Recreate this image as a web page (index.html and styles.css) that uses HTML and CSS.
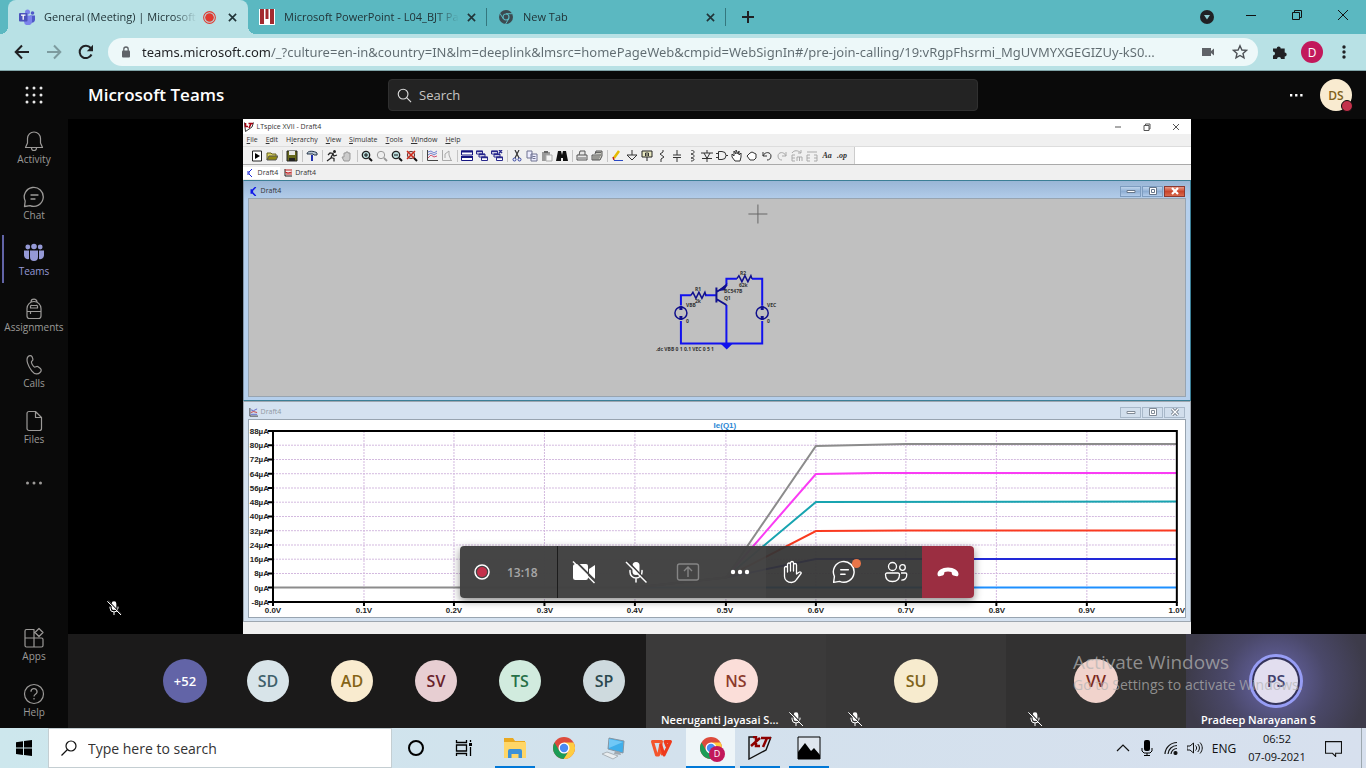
FILE: index.html
```html
<!DOCTYPE html>
<html lang="en">
<head>
<meta charset="utf-8">
<title>General (Meeting) | Microsoft Teams</title>
<link rel="stylesheet" href="styles.css">
</head>
<body>
<svg class="defs" aria-hidden="true">
  <symbol id="x" viewBox="0 0 10 10"><path d="M1 1l8 8M9 1L1 9" fill="none" stroke="currentColor" stroke-width="1.8"/></symbol>
  <symbol id="mic-off" viewBox="0 0 24 24"><rect x="8.500" y="2" width="7" height="13" rx="3.500" fill="currentColor"/><path d="M6 10.500v1.500a6 6 0 0 0 12 0v-1.500M12 18v4" fill="none" stroke="currentColor" stroke-width="1.500" stroke-linecap="round"/><path d="M3.500 1L23 21.500" stroke="#3b3a3a" stroke-width="1.800"/><path d="M2 2l20.500 20.500" stroke="currentColor" stroke-width="1.500"/></symbol>
  <symbol id="chat" viewBox="0 0 22 22"><path d="M1.500 20.500l.7-5.500A9.500 9.500 0 1 1 7 19.600z" fill="none" stroke="currentColor" stroke-width="1.300" stroke-linejoin="round"/><path d="M8 9h7M8 13h4" stroke="currentColor" stroke-width="1.300" stroke-linecap="round"/></symbol>
  <symbol id="chrome" viewBox="0 0 24 24"><circle cx="12" cy="12" r="11" fill="#dd4b3c"/><path d="M12 6.500h9.500A11 11 0 0 1 11.500 23L17 14z" fill="#ffcd41"/><path d="M2.500 6.500L7.400 15l4.600 2.500 3.500-.5-4 6A11 11 0 0 1 2.500 6.500z" fill="#1c9c56"/><circle cx="12" cy="12" r="5.500" fill="#fff"/><circle cx="12" cy="12" r="4.200" fill="#4a8af4"/></symbol>
</svg>

<div class="tabstrip">
  <div class="tab tab-active">
    <svg class="favicon" viewBox="0 0 16 16"><circle cx="8.500" cy="3" r="2.500" fill="#7b83eb"/><circle cx="13.500" cy="4" r="1.800" fill="#5059c9"/><path d="M11 6.500h5V11a3 3 0 0 1-4 2.500z" fill="#5059c9"/><path d="M5 6.500h8V12a4 4 0 0 1-8 .5z" fill="#7b83eb"/><rect y="4" width="8.500" height="8.500" rx="1" fill="#4b53bc"/><path d="M2 6.200h4.500M4.200 6.200v4.600" stroke="#fff" stroke-width="1.300"/></svg>
    <a class="tab-title" href="#meeting">General (Meeting) | Microsoft Teams</a>
    <svg class="rec" viewBox="0 0 12 12"><circle cx="6" cy="6" r="5.400" fill="none" stroke="#e03a30"/><circle cx="6" cy="6" r="4" fill="#e03a30"/></svg>
    <button class="tab-close" aria-label="Close tab"><svg><use href="#x"/></svg></button>
  </div>
  <div class="tab">
    <svg class="favicon" viewBox="0 0 16 16"><path fill="#fff" d="M0 0h16v16H0z"/><path fill="#a32a2f" d="M1 0h4v15H1zM6.500 0h3v10h-3zM11 0h4v15h-4z"/></svg>
    <a class="tab-title" href="#slides">Microsoft PowerPoint - L04_BJT Part</a>
    <button class="tab-close" aria-label="Close tab"><svg><use href="#x"/></svg></button>
  </div>
  <div class="tab">
    <svg class="favicon" viewBox="0 0 16 16"><circle cx="8" cy="8" r="7" fill="#3c4a50"/><circle cx="8" cy="8" r="3" fill="#3c4a50" stroke="#5bb8c1" stroke-width="1.200"/><path d="M8 4.700h6.300M5.200 9.700L2 4.400M10.800 9.700L7.600 15" stroke="#5bb8c1"/></svg>
    <a class="tab-title" href="#newtab">New Tab</a>
    <button class="tab-close" aria-label="Close tab"><svg><use href="#x"/></svg></button>
  </div>
  <button class="newtab" aria-label="New tab"><svg viewBox="0 0 12 12"><path d="M6 0v12M0 6h12" stroke="#202124" stroke-width="2"/></svg></button>
  <div class="winbtns">
    <button class="tabsearch" aria-label="Search tabs"><svg viewBox="0 0 14 14"><circle cx="7" cy="7" r="7" fill="#202124"/><path d="M4 5h6L7 9.500z" fill="#8fcdd3"/></svg></button>
    <button aria-label="Minimize"><svg viewBox="0 0 12 12"><path d="M1 6.500h10" stroke="#111"/></svg></button>
    <button aria-label="Restore"><svg viewBox="0 0 12 12"><path d="M1.500 3.500h7v7h-7zM3.500 3V1.500h7v7H9" fill="none" stroke="#111"/></svg></button>
    <button aria-label="Close"><svg viewBox="0 0 12 12"><path d="M1 1l10 10M11 1L1 11" stroke="#111"/></svg></button>
  </div>
</div>

<div class="navbar">
  <button aria-label="Back"><svg viewBox="0 0 16 16"><path d="M15 8H2M8 1.500L1.700 8 8 14.500" fill="none" stroke="#202124" stroke-width="2"/></svg></button>
  <button aria-label="Forward"><svg viewBox="0 0 16 16"><path d="M1 8h13M8 1.500L14.300 8 8 14.500" fill="none" stroke="#7d9b9f" stroke-width="2"/></svg></button>
  <button aria-label="Reload"><svg viewBox="0 0 16 16"><path d="M13.500 10.500A6.200 6.200 0 1 1 12.700 4" fill="none" stroke="#202124" stroke-width="2"/><path d="M15 .8v6.400H8.800z" fill="#202124"/></svg></button>
  <div class="omnibox">
    <svg class="lock" viewBox="0 0 10 12"><rect x="1" y="4.500" width="8" height="7" rx="1" fill="#5f6368"/><path d="M2.800 5V3.200a2.200 2.200 0 0 1 4.400 0V5" fill="none" stroke="#5f6368" stroke-width="1.300"/></svg>
    <input class="url" type="text" aria-label="Address" value="teams.microsoft.com/_?culture=en-in&amp;country=IN&amp;lm=deeplink&amp;lmsrc=homePageWeb&amp;cmpid=WebSignIn#/pre-join-calling/19:vRgpFhsrmi_MgUVMYXGEGIZUy-kS0...">
    <button aria-label="Camera"><svg viewBox="0 0 16 16"><path d="M2 4h9v3l3-2.500v7L11 9v3H2z" fill="#5f6368"/></svg></button>
    <button aria-label="Bookmark"><svg viewBox="0 0 16 16"><path d="M8 1.800l1.900 4.200 4.500.4-3.400 3 1 4.500L8 11.500 4 13.900l1-4.500-3.400-3 4.500-.4z" fill="none" stroke="#4d5156" stroke-width="1.400"/></svg></button>
  </div>
  <button aria-label="Extensions"><svg viewBox="0 0 16 16"><path d="M1 4.500h3.700a2 2 0 1 1 4 0h4v4a2 2 0 1 1 0 4V15H9a2 2 0 0 0-4 0H1v-3.500a2 2 0 0 0 0-4z" fill="#202124"/></svg></button>
  <button class="profile" aria-label="Profile">D</button>
  <button aria-label="Chrome menu"><svg viewBox="0 0 16 16" fill="#202124"><circle cx="8" cy="3" r="1.700"/><circle cx="8" cy="8" r="1.700"/><circle cx="8" cy="13" r="1.700"/></svg></button>
</div>

<header class="teams-header">
  <div class="brand">
    <button aria-label="App launcher"><svg viewBox="0 0 18 18" fill="#e8e8e8"><circle cx="2" cy="2" r="1.500"/><circle cx="9" cy="2" r="1.500"/><circle cx="16" cy="2" r="1.500"/><circle cx="2" cy="9" r="1.500"/><circle cx="9" cy="9" r="1.500"/><circle cx="16" cy="9" r="1.500"/><circle cx="2" cy="16" r="1.500"/><circle cx="9" cy="16" r="1.500"/><circle cx="16" cy="16" r="1.500"/></svg></button>
    <h1>Microsoft Teams</h1>
  </div>
  <label class="teams-search">
    <svg viewBox="0 0 16 16"><circle cx="6.500" cy="6.500" r="5.200" fill="none" stroke="#ddd" stroke-width="1.200"/><path d="M10.300 10.300L15 15" stroke="#ddd" stroke-width="1.200"/></svg>
    <input type="search" placeholder="Search" aria-label="Search">
  </label>
  <div class="account">
    <button aria-label="Settings and more"><svg viewBox="0 0 14 4" fill="#fff"><path d="M0 1h2.500v2.500H0zM5.500 1H8v2.500H5.500zM11 1h2.500v2.500H11z"/></svg></button>
    <button class="me" aria-label="Account">DS<span class="presence"></span></button>
  </div>
</header>

<div class="app">
  <nav class="rail">
    <a href="#activity"><svg viewBox="0 0 22 22"><path d="M11 2a6.500 6.500 0 0 0-6.500 6.500V13l-2 4.500h17l-2-4.500V8.500A6.500 6.500 0 0 0 11 2zM8.500 18a2.500 2.500 0 0 0 5 0"/></svg>Activity</a>
    <a href="#chat"><svg><use href="#chat"/></svg>Chat</a>
    <a href="#teams" class="current"><svg class="solid" viewBox="0 0 22 22"><circle cx="4.800" cy="5" r="2.400"/><circle cx="11" cy="4.500" r="2.800"/><circle cx="17.200" cy="5" r="2.400"/><path d="M1 8.500h5V17a4 4 0 0 1-5-3.500zM21 8.500h-5V17a4 4 0 0 0 5-3.500zM7 8.500h8V15a4 4 0 0 1-8 0z"/></svg>Teams</a>
    <a href="#assignments"><svg viewBox="0 0 22 22"><path d="M4 10.500a7 7 0 0 1 14 0V18a2.500 2.500 0 0 1-2.500 2.500h-9A2.500 2.500 0 0 1 4 18zM8 4a3 2.800 0 0 1 6 0M4 13.500h14M7.500 13.500V16M9 7.500h4a1 1 0 0 1 1.500 1v1.500h-7V8.500a1 1 0 0 1 1.500-1z"/></svg>Assignments</a>
    <a href="#calls"><svg viewBox="0 0 22 22"><path d="M5.200 2.500c1-1 3-1.200 3.900.3l.8 2.300c.4 1.300-1.400 2-1.500 3 0 1.200 1.700 4.400 2.900 4.900 1.300.5 2.200-1.200 3.800-.3l2.300 1.800c1.400 1.200.8 2.900-.4 4-1.800 1.900-5 2.500-8.300-1.700C5.300 12.500 2.300 5.500 5.200 2.500z"/></svg>Calls</a>
    <a href="#files"><svg viewBox="0 0 22 22"><path d="M6 1.500h6.500L18.500 7.500V18.500a2 2 0 0 1-2 2H6a2 2 0 0 1-2-2v-15a2 2 0 0 1 2-2zM12.500 1.500v6h6"/></svg>Files</a>
    <button aria-label="More apps"><svg class="solid" viewBox="0 0 22 22"><circle cx="4.500" cy="11" r="1.500"/><circle cx="11" cy="11" r="1.500"/><circle cx="17.500" cy="11" r="1.500"/></svg></button>
    <a href="#apps" class="push"><svg viewBox="0 0 22 22"><path d="M11 2.500H3.500a1.500 1.500 0 0 0-1.500 1.500v7h9zM2 11v7.500A1.500 1.500 0 0 0 3.500 20H11v-9zM11 11h7.500a1.500 1.500 0 0 1 1.500 1.500v6a1.500 1.500 0 0 1-1.500 1.500H11zM16 1.500l4 4-4 4-4-4z"/></svg>Apps</a>
    <a href="#help"><svg viewBox="0 0 22 22"><circle cx="11" cy="11" r="9.500"/><path d="M8 8.700a3 3 0 1 1 4.500 2.500c-1 .6-1.500 1-1.500 2.300M11 15v1.500"/></svg>Help</a>
  </nav>

  <main class="meeting">
    <section class="stage">
      <svg class="stage-mic"><use href="#mic-off"/></svg>

      <div class="ltspice">
        <div class="lt-title">
          <svg viewBox="0 0 10 10"><path d="M.5.500L1.500 9.500 8 5 9.500.5" fill="#fff" stroke="#333"/><path d="M1.500 1v3.500H4M4.500 1.500h4.500M7 1.500L5 6" stroke="#a00010" stroke-width="1.600" fill="none"/></svg>
          <span>LTspice XVII - Draft4</span>
          <div class="lt-win"><svg viewBox="0 0 8 8"><path d="M1 4h6"/></svg><svg viewBox="0 0 8 8"><path d="M1 2.500h5v5H1zM2.500 2V1H7v5H6"/></svg><svg viewBox="0 0 8 8"><path d="M1 1l6 6M7 1L1 7"/></svg></div>
        </div>
        <div class="lt-menu">
          <button><u>F</u>ile</button><button><u>E</u>dit</button><button>H<u>i</u>erarchy</button><button><u>V</u>iew</button><button><u>S</u>imulate</button><button><u>T</u>ools</button><button><u>W</u>indow</button><button><u>H</u>elp</button>
        </div>
        <div class="lt-tools">
          <div class="lt-tools-set">
            <button aria-label="New"><svg viewBox="0 0 12 12"><path d="M1.500 1h9v10h-9z" fill="#fff" stroke="#222"/><path d="M4 3l5 3-5 3z" fill="#000"/></svg></button>
            <button aria-label="Open"><svg viewBox="0 0 12 12"><path d="M1 10V3h4l1 1h4v2" fill="#d8d060" stroke="#666020"/><path d="M1 10l2-4h9l-2 4z" fill="#908810" stroke="#555"/></svg></button><i></i>
            <button aria-label="Save"><svg viewBox="0 0 12 12"><path d="M1 1h10v10H1z" fill="#66681c" stroke="#222"/><path d="M3 1h6v4H3z" fill="#e8e8e8"/><path d="M3 8h6v3H3z" fill="#222"/></svg></button><i></i>
            <button aria-label="Control panel"><svg viewBox="0 0 12 12"><path d="M1 4c0-4 8-3 10-1v2H8L7 4H3z" fill="#b6c4d0" stroke="#26364a"/><path d="M6 5v6" stroke="#2030b0" stroke-width="2"/></svg></button><i></i>
            <button aria-label="Run"><svg viewBox="0 0 12 12"><circle cx="8.500" cy="1.500" r="1.500" fill="#222"/><path d="M2 5l2-2 3 .5-2 4 3 1v3M5 8l-4 3M7 4l1 2 3-1" fill="none" stroke="#222" stroke-width="1.200"/></svg></button>
            <button aria-label="Halt"><svg viewBox="0 0 12 12"><path d="M3 11L1 7h2V3h2V2h2v1h2v6l-1 2z" fill="#ccc" stroke="#999"/></svg></button><i></i>
            <button aria-label="Zoom in"><svg viewBox="0 0 12 12"><circle cx="5" cy="5" r="3.700" fill="#bdd" stroke="#222" stroke-width="1.300"/><path d="M3 5h4M5 3v4" stroke="#111"/><path d="M8 8l3 3" stroke="#111" stroke-width="2"/></svg></button>
            <button aria-label="Pan"><svg viewBox="0 0 12 12"><circle cx="5" cy="5" r="3.700" fill="#eee" stroke="#999"/><path d="M8 8l3 3" stroke="#999" stroke-width="1.800"/></svg></button>
            <button aria-label="Zoom out"><svg viewBox="0 0 12 12"><circle cx="5" cy="5" r="3.700" fill="#bdd" stroke="#222" stroke-width="1.300"/><path d="M3 5h4" stroke="#111"/><path d="M8 8l3 3" stroke="#111" stroke-width="2"/></svg></button>
            <button aria-label="Zoom full"><svg viewBox="0 0 12 12"><circle cx="5" cy="5" r="3.700" fill="#dcc" stroke="#633"/><path d="M1 1l8 8M9 1L1 9" stroke="#d02818" stroke-width="1.500"/><path d="M8 8l3 3" stroke="#111" stroke-width="2"/></svg></button><i></i>
            <button aria-label="Autorange"><svg viewBox="0 0 12 12"><path d="M1.500 0v10.500H12" fill="none" stroke="#444"/><path d="M2 2l3-1 3 2 3-2M2 5l3-2 3 2 3-2" fill="none" stroke="#7080d0"/><path d="M2 8l3-3 3 2 3-1" fill="none" stroke="#d05070"/></svg></button>
            <button aria-label="Plot settings"><svg viewBox="0 0 12 12"><path d="M1.500 0v10.500H11M4 8V4l4-3v4l2 5" fill="none" stroke="#aaa"/></svg></button><i></i>
            <button aria-label="Tile"><svg viewBox="0 0 12 12"><path d="M.5 1h11v4H.5zM.5 6.500h11v4H.5z" fill="#fff" stroke="#151580"/><path d="M0 1.500h12M0 7h12" stroke="#151580" stroke-width="2"/></svg></button>
            <button aria-label="Cascade"><svg viewBox="0 0 12 12"><path d="M.5 1h6v3h-6zM3 4h6v3H3zM5.500 7h6v3.500h-6z" fill="#fff" stroke="#28288c"/><path d="M0 1.500h7M3 4.500h6M5 7.500h7" stroke="#28288c" stroke-width="1.600"/></svg></button>
            <button aria-label="Close windows"><svg viewBox="0 0 12 12"><path d="M.5 1h6v3h-6zM3 4h6v3H3zM5.500 7h6v3.500h-6z" fill="#fff" stroke="#28288c"/><path d="M0 1.500h7M3 4.500h6M5 7.500h7M8 0l3 3M11 0L8 3" stroke="#28288c" stroke-width="1.500"/></svg></button><i></i>
            <button aria-label="Cut"><svg viewBox="0 0 12 12"><path d="M4 0l4 8M8 0L4 8" stroke="#333" stroke-width="1.200"/><circle cx="3.500" cy="9.500" r="1.500" fill="none" stroke="#3040a0"/><circle cx="8.500" cy="9.500" r="1.500" fill="none" stroke="#3040a0"/></svg></button>
            <button aria-label="Copy"><svg viewBox="0 0 12 12"><path d="M1 1h5v7H1zM5 4h6v7H5z" fill="#eef" stroke="#6f7290"/><path d="M6.500 6.500h3M6.500 8.500h3" stroke="#6f7290"/></svg></button>
            <button aria-label="Paste"><svg viewBox="0 0 12 12"><path d="M1 2h8v9H1z" fill="#999"/><path d="M3 1h4v2H3z" fill="#666"/><path d="M5 5h6v6H5z" fill="#f4f4f4" stroke="#aaa"/></svg></button>
            <button aria-label="Find"><svg viewBox="0 0 12 12"><path d="M2 1h3l1 4 1-4h3l2 10H7V8H5v3H0z" fill="#111"/></svg></button><i></i>
            <button aria-label="Print"><svg viewBox="0 0 12 12"><path d="M3 5l1-4h5v4M1 5h10v5H1z" fill="#e6e6e6" stroke="#555"/><path d="M2 8h8" stroke="#666"/></svg></button>
            <button aria-label="Print setup"><svg viewBox="0 0 12 12"><path d="M4 4l1-3h6v5l-2 4H1V5h9" fill="#c9c9c0" stroke="#555"/><path d="M2 7h7M5 2.500h5M2 9h6" stroke="#666"/></svg></button><i></i>
            <button aria-label="Wire"><svg viewBox="0 0 12 12"><path d="M3 8l5-7" stroke="#e5ba00" stroke-width="2.500"/><path d="M2 7l1 3" stroke="#b22" stroke-width="1.500"/><path d="M3 10.500h9" stroke="#2947c4"/></svg></button>
            <button aria-label="Ground"><svg viewBox="0 0 12 12"><path d="M6 0v5M1 5h10L6 10z"/></svg></button>
            <button aria-label="Label net"><svg viewBox="0 0 12 12"><path d="M1 1h10v6H1zM6 7v4" fill="#e8e8c0" stroke="#222"/><path d="M4.500 6V3h3v3M4.500 5h3"/></svg></button>
            <button aria-label="Resistor"><svg viewBox="0 0 12 12"><path d="M7 0v2L4 4l4 3-3 2v3"/></svg></button>
            <button aria-label="Capacitor"><svg viewBox="0 0 12 12"><path d="M6 0v5M2 5h8M2 7.500h8M6 7.500V12"/></svg></button>
            <button aria-label="Inductor"><svg viewBox="0 0 12 12"><path d="M5 0c4 0 4 4 0 4 4 0 4 4 0 4 4 0 4 3 0 3"/></svg></button>
            <button aria-label="Diode"><svg viewBox="0 0 12 12"><path d="M0 3h12M6 0v3M1 8.500h10M3 3l3 5.500L9 3M6 8.500V12"/></svg></button>
            <button aria-label="Component"><svg viewBox="0 0 12 12"><path d="M2.500 1.500H6a4 4 0 0 1 0 8H2.500zM0 3.500h2M0 7.500h2M10 5.500h2"/></svg></button>
            <button aria-label="Move"><svg viewBox="0 0 12 12"><path d="M4 11L1 7V4l2 2V1l2 3V0l2 4 1-3v4l2-2v4l-1 4z" fill="#fff" stroke="#333"/></svg></button>
            <button aria-label="Drag"><svg viewBox="0 0 12 12"><path d="M4 10L1 6l2-2 1-1 2-1 2 1 2 1v4l-2 2z" fill="#fff" stroke="#333"/></svg></button>
            <button aria-label="Undo"><svg viewBox="0 0 12 12"><path d="M2 2v4h4M2 6c2-5 8-4 8 0 0 3-2 4-4 4"/></svg></button>
            <button aria-label="Redo" class="dim"><svg viewBox="0 0 12 12"><path d="M10 2v4H6M10 6C8 1 2 2 2 6c0 3 2 4 4 4"/></svg></button>
            <button aria-label="Rotate" class="dim"><svg viewBox="0 0 12 12"><path d="M1 3c2-3 6-3 9 0M10 0v3H7M4 5H1v6h3M1 8h3M6 11V7h5v4M8.500 7v4"/></svg></button>
            <button aria-label="Mirror" class="dim"><svg viewBox="0 0 12 12"><path d="M1 2h10M4 5H1v6h3M1 8h3M8 5h3v6H8M11 8H8"/></svg></button>
            <button aria-label="Text"><b>Aa</b></button>
            <button aria-label="SPICE directive"><b>.op</b></button>
          </div>
        </div>
        <div class="lt-tabs">
          <a href="#schematic" class="lt-tab lt-tab-on"><svg viewBox="0 0 8 8"><path d="M5 0L2 3v2l3 3M1 2v4" fill="none" stroke="#1c28d8"/></svg>Draft4</a>
          <a href="#plot" class="lt-tab"><svg viewBox="0 0 8 8"><path d="M1 0v7h7" fill="none" stroke="#222"/><path d="M1 1h7M1 3l3 1 4-1M2 5h6" fill="none" stroke="#c02020"/></svg>Draft4</a>
        </div>

        <div class="child child-active">
          <div class="child-bar">
            <svg viewBox="0 0 8 8"><path d="M6 0L3 3v2l3 3M2 2v4" fill="none" stroke="#1018e8" stroke-width="1.300"/></svg>
            <span>Draft4</span>
            <button aria-label="Minimize schematic"><svg viewBox="0 0 10 8"><path d="M1 3.500h8v2H1z" fill="#fff" stroke="#66768a"/></svg></button>
            <button aria-label="Maximize schematic"><svg viewBox="0 0 10 8"><path d="M1.500.5h7v7h-7zM3.500 2.500h3v3h-3z" fill="#fff" stroke="#66768a"/></svg></button>
            <button aria-label="Close schematic" class="close"><svg viewBox="0 0 10 8"><path d="M2 1l6 6M8 1L2 7" stroke="#fff" stroke-width="2.200"/></svg></button>
          </div>
          <div class="canvas">
            <svg viewBox="249 199 937 197">
              <path d="M748.500 214h19M758 204.500v19" stroke="#666"/>
              <g fill="none" stroke="#1212ee" stroke-width="2">
                <path d="M681 305.500V295.300h10M705 295.300h11M726.500 286v-7.300h10.500M752 278.700h10.300v27M681 321v22.500h81.300V321M726.500 305v38.500"/>
                <path d="M723 344.500h7.500l-3.700 3.700z" fill="#1212ee"/>
              </g>
              <g fill="none" stroke="#10108c" stroke-width="1.500">
                <path d="M691 295.300l2-3 3 6 3-6 3 6 3-6 1 3M737 278.700l2-3 3 6 3-6 3 6 3-6 1 3"/>
                <path d="M716.500 287.500v15M716.500 292l10-6M716.500 299l10 6" stroke-width="2"/>
                <path d="M720 290l6-5-1.500 4.500z" fill="#10108c"/>
                <circle cx="681" cy="313" r="6"/><circle cx="762.300" cy="313" r="6"/>
                <path d="M681 306v4M681 316v4M762.300 306v4M762.300 316v4" stroke-width="3"/>
              </g>
              <g class="net-labels">
                <text x="695" y="291">R1</text><text x="695" y="303">2k</text><text x="740" y="275">R2</text><text x="739" y="287">62k</text>
                <text x="724" y="293.500">BC547B</text><text x="724" y="300.500">Q1</text>
                <text x="686" y="307.500">VBB</text><text x="686" y="323">0</text><text x="767" y="307.500">VEC</text><text x="767" y="323">0</text>
                <text x="656" y="351">.dc VBB 0 1 0.1 VEC 0 5 1</text>
              </g>
            </svg>
          </div>
        </div>

        <div class="child child-plot">
          <div class="child-bar">
            <svg viewBox="0 0 10 10"><path d="M1 0v9h9" fill="none" stroke="#333"/><path d="M2 2l3 1 4-2M2 7h7" fill="none" stroke="#5860c8"/><path d="M2 5l3-1 4 1" fill="none" stroke="#c03030"/></svg>
            <span>Draft4</span>
            <button aria-label="Minimize plot"><svg viewBox="0 0 10 8"><path d="M1 3.500h8v2H1z" fill="#fff" stroke="#808a96"/></svg></button>
            <button aria-label="Maximize plot"><svg viewBox="0 0 10 8"><path d="M1.500.5h7v7h-7zM3.500 2.500h3v3h-3z" fill="#fff" stroke="#808a96"/></svg></button>
            <button aria-label="Close plot"><svg viewBox="0 0 10 8"><path d="M2 1l6 6M8 1L2 7" stroke="#69737f" stroke-width="3"/><path d="M2 1l6 6M8 1L2 7" stroke="#fff" stroke-width="1.400"/></svg></button>
          </div>
          <div class="canvas">
            <svg viewBox="249 421 937 197">
              <path class="grid" d="M273 446.200h904M273 460.500h904M273 474.700h904M273 489h904M273 503.200h904M273 517.500h904M273 531.700h904M273 546h904M273 560.200h904M273 574.500h904M364 432v171M454 432v171M544.500 432v171M635 432v171M726 432v171M816 432v171M906 432v171M996.500 432v171M1087 432v171"/>
              <g fill="none" stroke-width="2">
                <path d="M635 588.500h542" stroke="#1e90ff"/>
                <path d="M635 588.500l91-10 90-18.500h361" stroke="#2229d8"/>
                <path d="M635 588.500l91-10 90-46.500 90-.5h271" stroke="#fa3a20"/>
                <path d="M635 588.500l91-10 90-75.500 361-.5" stroke="#18a4b0"/>
                <path d="M635 588.500l91-10 90-103.500 60-1h301" stroke="#fa3cf4"/>
                <path d="M273 588.500h362l91-10 90-131.500 90-2h271" stroke="#8c8c8c"/>
                <path d="M273 432h904v171H273z" stroke="#000"/>
                <path d="M268 432h5M268 446.200h5M268 460.500h5M268 474.700h5M268 489h5M268 503.200h5M268 517.500h5M268 531.700h5M268 546h5M268 560.200h5M268 574.500h5M268 588.500h5M268 603h5M273 603v4M364 603v4M454 603v4M544.500 603v4M635 603v4M726 603v4M816 603v4M906 603v4M996.500 603v4M1087 603v4M1177 603v4" stroke="#000"/>
              </g>
              <text class="trace" x="725" y="429">Ie(Q1)</text>
              <g class="ylab"><text x="269" y="435">88µA</text><text x="269" y="449">80µA</text><text x="269" y="463">72µA</text><text x="269" y="478">64µA</text><text x="269" y="492">56µA</text><text x="269" y="506">48µA</text><text x="269" y="520">40µA</text><text x="269" y="535">32µA</text><text x="269" y="549">24µA</text><text x="269" y="563">16µA</text><text x="269" y="577">8µA</text><text x="269" y="592">0µA</text><text x="269" y="606">-8µA</text></g>
              <g class="xlab"><text x="273" y="614">0.0V</text><text x="364" y="614">0.1V</text><text x="454" y="614">0.2V</text><text x="545" y="614">0.3V</text><text x="635" y="614">0.4V</text><text x="725" y="614">0.5V</text><text x="816" y="614">0.6V</text><text x="906" y="614">0.7V</text><text x="997" y="614">0.8V</text><text x="1087" y="614">0.9V</text><text x="1177" y="614">1.0V</text></g>
            </svg>
          </div>
        </div>
        <div class="lt-status"></div>
      </div>

      <div class="callbar">
        <div class="callbar-rec">
          <svg viewBox="0 0 16 16"><circle cx="8" cy="8" r="7" fill="none" stroke="#fff" stroke-width="1.500"/><circle cx="8" cy="8" r="5" fill="#c4314b"/></svg>
          <span>13:18</span>
        </div>
        <button aria-label="Turn camera on"><svg viewBox="0 0 24 24"><path d="M3.500 4H14a2 2 0 0 1 2 2v12a2 2 0 0 1-2 2H3.500A2.500 2.500 0 0 1 1 17.500v-11A2.500 2.500 0 0 1 3.500 4zM17 9l6-4v14l-6-4z" fill="#fff"/><path d="M3 .500L24 21.500" stroke="#444" stroke-width="1.800"/><path d="M1 1.500l21.500 21.500" stroke="#fff" stroke-width="1.500"/></svg></button>
        <button aria-label="Unmute"><svg><use href="#mic-off"/></svg></button>
        <button aria-label="Share content"><svg viewBox="0 0 24 24" fill="none" stroke="#858585" stroke-width="1.400"><rect x="1.500" y="4" width="21" height="16" rx="2"/><path d="M12 17V7M8 11l4-4 4 4"/></svg></button>
        <button aria-label="More actions"><svg viewBox="0 0 24 24" fill="#fff"><circle cx="5" cy="12" r="2.200"/><circle cx="12" cy="12" r="2.200"/><circle cx="19" cy="12" r="2.200"/></svg></button>
        <button class="side" aria-label="Raise hand"><svg viewBox="0 0 24 24" fill="none" stroke="#fff" stroke-width="1.300" stroke-linejoin="round" stroke-linecap="round"><path d="M7.500 12V4.500a1.500 1.500 0 0 1 3 0V3a1.500 1.500 0 0 1 3 0v2a1.500 1.500 0 0 1 3 0v9l2.500-1.800c1.500-.8 2.700.5 2 1.300L16.500 19.500c-1.200 2-2.500 3-5 3-4 0-7-2.500-7-6V8a1.500 1.500 0 0 1 3 0M10.500 4.500V11M13.500 5v6"/></svg></button>
        <button class="side" aria-label="Show conversation"><svg><use href="#chat"/></svg><span class="notice"></span></button>
        <button class="side" aria-label="Show participants"><svg viewBox="0 0 24 24" fill="none" stroke="#fff" stroke-width="1.300"><circle cx="8.500" cy="6.500" r="4"/><circle cx="18.500" cy="7.500" r="2.800"/><path d="M3 13h11a1.500 1.500 0 0 1 1.500 1.500c0 4-2 7-7 7s-7-3-7-7A1.500 1.500 0 0 1 3 13zM17 13h4.500a1.300 1.300 0 0 1 1.300 1.300c0 4-2 6-5.500 5.800"/></svg></button>
        <button class="hangup" aria-label="Leave"><svg viewBox="0 0 24 24"><path d="M12 7.500c6 0 10.500 3 10.500 6.500 0 2-1 2.500-2 2.300l-3-.8c-1-.3-1.500-1-1.700-2l-.3-1.500c-2-.8-5-.8-7 0l-.3 1.500c-.2 1-.7 1.700-1.700 2l-3 .8c-1 .2-2-.3-2-2.300C1.500 10.500 6 7.500 12 7.500z" fill="#fff"/></svg></button>
      </div>
    </section>

    <section class="people">
      <div class="overflow-list">
        <button class="avatar more">+52</button>
        <span class="avatar sd">SD</span><span class="avatar ad">AD</span><span class="avatar sv">SV</span><span class="avatar ts">TS</span><span class="avatar sp">SP</span>
      </div>
      <div class="tile t1"><span class="avatar ns">NS</span><div class="caption"><span>Neeruganti Jayasai S...</span><svg><use href="#mic-off"/></svg></div></div>
      <div class="tile t2"><span class="avatar su">SU</span><div class="caption"><svg><use href="#mic-off"/></svg></div></div>
      <div class="tile t3"><span class="avatar vv">VV</span><div class="caption"><svg><use href="#mic-off"/></svg></div></div>
      <div class="tile t4"><span class="avatar ps">PS</span><div class="caption"><span>Pradeep Narayanan S</span></div></div>
      <div class="watermark"><p class="wm-title">Activate Windows</p><p>Go to Settings to activate Windows.</p></div>
    </section>
  </main>
</div>

<footer class="taskbar">
  <button class="start" aria-label="Start"><svg viewBox="0 0 16 16"><path d="M0 2.200l7-1v6.400H0zM8 1l8-1v7.600H8zM0 8.500h7v6.400l-7-1zM8 8.500h8V16l-8-1z"/></svg></button>
  <label class="tb-search">
    <svg viewBox="0 0 16 16"><circle cx="10" cy="6" r="5" fill="none" stroke="#111" stroke-width="1.200"/><path d="M6.500 9.500L.5 15.500" stroke="#111" stroke-width="1.200"/></svg>
    <input type="text" placeholder="Type here to search" aria-label="Type here to search">
  </label>
  <button class="sys" aria-label="Cortana"><svg viewBox="0 0 18 18"><circle cx="9" cy="9" r="7" fill="none" stroke="#000" stroke-width="2"/></svg></button>
  <button class="sys" aria-label="Task view"><svg viewBox="0 0 18 18"><path d="M1.500 1v2.500h10V1M1.500 6h10v6h-10zM1.500 17v-2.500h10V17M15.500 1v2M15.500 8v9" fill="none" stroke="#000" stroke-width="1.300"/><path d="M14 4h3v3h-3z"/></svg></button>
  <div class="apps">
    <button class="open" aria-label="File Explorer"><svg viewBox="0 0 24 24"><path d="M1 2h9l2 3h10v17H1z" fill="#e9a820"/><path d="M1 6h22v16H1z" fill="#ffd667"/><path d="M5 22v-7a2 2 0 0 1 2-2h10a2 2 0 0 1 2 2v7h-3.500v-4h-7v4z" fill="#3c91d8"/></svg></button>
    <button aria-label="Chrome"><svg><use href="#chrome"/></svg></button>
    <button aria-label="Remote desktop"><svg viewBox="0 0 24 24"><path d="M8 2l15 3-1 12L7 13z" fill="#3faeea" stroke="#8796a3"/><path d="M8 3l14 3-14 6z" fill="#70c8f6"/><path d="M14 15l5 1 1 3-7-1z" fill="#a0a8ae"/><path d="M1 18l5-2 11 4-5 3z" fill="#e9edef" stroke="#aab3b9"/></svg></button>
    <button aria-label="WPS Office"><svg viewBox="0 0 24 24" fill="none" stroke-linejoin="round"><path d="M2.500 5.500h9L8.500 19h-2zM12.500 19L10 12" stroke="#f4552c" stroke-width="3"/><path d="M10.500 8l3.500 11 6.500-13.500h-5.500l2 5" stroke="#ee3a1c" stroke-width="3"/></svg></button>
    <button class="open active" aria-label="Chrome, D"><svg><use href="#chrome"/></svg><span class="chrome-badge">D</span></button>
    <button class="open" aria-label="LTspice"><svg viewBox="0 0 24 24"><path d="M5 1H1v22l17-9 5-13" fill="none" stroke="#111" stroke-width="1.400"/><path d="M5 1h3v9h4M3 10L12 2M13 2h10M19 2l-4 9" fill="none" stroke="#8d0000" stroke-width="2.500"/></svg></button>
    <button class="open" aria-label="Photos"><svg viewBox="0 0 24 24"><path d="M1 1h22v22H1z" fill="#dfe6ee" stroke="#000"/><path d="M1 23v-7l7-9 6 8 3-3 6 7v4z"/></svg></button>
  </div>
  <div class="tray">
    <button aria-label="Show hidden icons"><svg viewBox="0 0 16 16"><path d="M2 11l6-6 6 6" fill="none" stroke="#111" stroke-width="1.200"/></svg></button>
    <button aria-label="Microphone in use"><svg viewBox="0 0 16 16"><rect x="5" y="0" width="6" height="11" rx="2"/><path d="M3 8v3l2 2h6l2-2V8M8 13v3M5 15.500h6" fill="none" stroke="#000"/></svg></button>
    <button aria-label="Wi-Fi"><svg viewBox="0 0 16 16" fill="none" stroke="#111" stroke-width="1.200"><path d="M2 14A12 12 0 0 1 14 2.500M5 14a9 9 0 0 1 9-8.500M8 14a6 6 0 0 1 6-5.500"/><circle cx="12.500" cy="13" r="1.500" fill="#111"/></svg></button>
    <button aria-label="Volume"><svg viewBox="0 0 16 16" fill="none" stroke="#111"><path d="M0 6h3l3.500-3v10L3 10H0zM8.500 5.500c1.500 1.500 1.500 3.500 0 5M10.700 4c2.300 2.500 2.300 5.500 0 8M13 2.500c3 3.500 3 7.500 0 11"/></svg></button>
    <button class="lang">ENG</button>
    <button class="clock"><span>06:52</span><span>07-09-2021</span></button>
    <button class="notif" aria-label="Notifications"><svg viewBox="0 0 16 16"><path d="M.5 1.500h15v11H10v3l-3-3H.5z" fill="none" stroke="#111"/></svg></button>
  </div>
</footer>
</body>
</html>
```
FILE: styles.css
```css
* { box-sizing: border-box; }
body {
  margin: 0;
  height: 100vh;
  display: flex;
  flex-direction: column;
  overflow: hidden;
  background: #000;
  font-family: "Open Sans", "Noto Sans", sans-serif;
  font-size: 12px;
}
button, input { font: inherit; color: inherit; border: 0; padding: 0; margin: 0; background: none; min-width: 0; }
input { outline: 0; }
button { display: flex; align-items: center; justify-content: center; }
a { color: inherit; text-decoration: none; }
svg { display: block; flex: none; }
p, h1 { margin: 0; }
.defs { display: none; }

/* Browser tabs */
.tabstrip { display: flex; align-items: center; height: 34px; padding-left: 8px; background: #5bb8c1; color: #213438; flex: none; }
.tab { display: flex; align-items: center; width: 239px; height: 34px; padding: 0 10px 0 11px; position: relative; }
.tab:not(.tab-active)::after { content: ""; position: absolute; right: 0; top: 8px; height: 18px; width: 1px; background: #34777e; }
.tab-active { width: 240px; background: #b8e1e5; border-radius: 8px 8px 0 0; }
.tab-active::before, .tab-active::after { content: ""; position: absolute; bottom: 0; width: 8px; height: 8px; }
.tab-active::before { left: -8px; background: radial-gradient(circle at 0 0, #5bb8c1 8px, #b8e1e5 8px); }
.tab-active::after { right: -8px; background: radial-gradient(circle at 100% 0, #5bb8c1 8px, #b8e1e5 8px); }
.favicon { width: 16px; height: 16px; }
.tab-title { flex: 1; margin: 0 6px 0 9px; overflow: hidden; white-space: nowrap; font-size: 11px; line-height: 18px; mask-image: linear-gradient(90deg, #000 calc(100% - 24px), transparent); }
.rec { width: 13px; height: 13px; margin-right: 10px; }
.tab-close { width: 12px; height: 16px; }
.tab-close svg { width: 9px; height: 9px; }
.newtab { width: 44px; height: 34px; }
.newtab svg { width: 12px; height: 12px; }
.winbtns { display: flex; align-self: flex-start; margin-left: auto; height: 30px; }
.winbtns button { width: 46px; }
.winbtns .tabsearch { width: 42px; height: 34px; }
.winbtns svg { width: 12px; height: 12px; }
.winbtns .tabsearch svg { width: 14px; height: 14px; }

/* Address bar */
.navbar { display: flex; align-items: center; height: 37px; padding: 0 6px; background: #b8e1e5; border-bottom: 1px solid #80a4a8; flex: none; }
.navbar > button { width: 32px; height: 32px; }
.navbar > button svg { width: 16px; height: 16px; }
.omnibox { flex: 1; display: flex; align-items: center; height: 28px; margin: 0 6px; padding: 0 2px 0 13px; border-radius: 14px; background: #edf8f9; }
.url { flex: 1; height: 28px; font-family: "Noto Sans", sans-serif; font-size: 13px; color: transparent; background: linear-gradient(90deg, #202124 128px, #5f6b70 128px); background-clip: text; -webkit-background-clip: text; }
.omnibox button { width: 32px; height: 28px; }
.omnibox svg { width: 16px; height: 16px; }
.omnibox .lock { width: 10px; height: 12px; margin-right: 11px; }
.navbar > .profile { width: 22px; height: 22px; margin: 0 5px; border-radius: 50%; background: #c2185b; color: #fff; font-size: 12px; }

/* Teams header */
.teams-header { display: grid; grid-template-columns: minmax(0, 1fr) 590px minmax(0, 1fr); align-items: center; height: 48px; background: #0a0a0a; color: #fff; flex: none; }
.brand { display: flex; align-items: center; }
.brand button { width: 68px; height: 44px; }
.brand svg { width: 18px; height: 18px; }
.brand h1 { margin-left: 20px; font-size: 17px; font-weight: 600; line-height: 24px; white-space: nowrap; }
.teams-search { display: flex; align-items: center; height: 32px; padding: 0 8px; background: #232323; border: 1px solid #303030; border-radius: 4px; }
.teams-search svg { width: 15px; height: 15px; margin-right: 7px; }
.teams-search input { flex: 1; font-size: 13px; }
.teams-search input::placeholder { color: #c8c6c4; opacity: 1; }
.account { display: flex; justify-content: flex-end; align-items: center; padding-right: 14px; }
.account button { width: 48px; height: 32px; }
.account svg { width: 13px; height: 4px; }
.account .me { width: 32px; border-radius: 50%; background: #f9ebd0; color: #80601a; font-weight: 600; position: relative; }
.presence { position: absolute; right: -1px; bottom: -1px; width: 12px; height: 12px; border-radius: 50%; background: #c4314b; border: 1px solid #0a0a0a; }

/* Left rail */
.app { flex: 1; display: flex; min-height: 0; }
.rail { width: 68px; display: flex; flex-direction: column; background: #0a0a0a; color: #9c9a98; font-size: 10px; flex: none; }
.rail a, .rail button { display: flex; flex-direction: column; align-items: center; justify-content: center; height: 56px; line-height: 14px; position: relative; }
.rail a { padding-top: 2px; }
.rail svg { width: 22px; height: 22px; fill: none; stroke: currentColor; stroke-width: 1.2; stroke-linejoin: round; }
.rail .solid { fill: currentColor; stroke: none; }
.rail .current { color: #9599d6; }
.rail .current::before { content: ""; position: absolute; left: 2px; top: 4px; bottom: 4px; width: 2px; background: #6264a7; }
.rail .push { margin-top: auto; }

/* Meeting stage */
.meeting { flex: 1; display: flex; flex-direction: column; min-width: 0; }
.stage { flex: 1; display: flex; justify-content: center; position: relative; background: #000; min-height: 0; }
.stage-mic { position: absolute; left: 38px; bottom: 18px; width: 16px; height: 16px; color: #fff; }

/* Shared LTspice window */
.ltspice { width: 73.1%; display: flex; flex-direction: column; background: #f0f0f0; color: #333; font-size: 7px; line-height: 10px; }
.lt-title { display: flex; align-items: center; height: 15px; padding: 0 9px 0 1px; background: #fff; }
.lt-title > svg { width: 10px; height: 10px; margin-right: 3px; }
.lt-win { display: flex; gap: 21px; margin-left: auto; padding-right: 2px; }
.lt-win svg { width: 8px; height: 8px; fill: none; stroke: #555; }
.lt-menu { display: flex; gap: 8px; height: 13px; padding-left: 4px; border-bottom: 1px solid #ddd; }
.lt-tools { height: 18px; background: #fff; border-bottom: 1px solid #aaa; display: flex; }
.lt-tools-set { display: flex; align-items: center; background: #f0f0f0; padding: 0 4px 0 7px; border-right: 1px solid #ccc; }
.lt-tools button { width: 15px; height: 16px; }
.lt-tools i { width: 1px; height: 12px; margin: 0 2px; background: #c4c4c4; }
.lt-tools svg { width: 12px; height: 12px; fill: none; stroke: #333; stroke-width: 1; }
.lt-tools svg [fill]:not([stroke]) { stroke: none; }
.lt-tools .dim svg { stroke: #aaa; }
.lt-tools b { font: italic 700 8px "Liberation Serif", serif; }
.lt-tabs { display: flex; height: 15px; align-items: center; }
.lt-tab { display: flex; align-items: center; gap: 3px; height: 12px; padding: 0 2px 0 4px; }
.lt-tab-on { background: #fff; }
.lt-tab svg { width: 8px; height: 8px; }
.child { flex: 1 1 0; display: flex; flex-direction: column; min-height: 0; padding: 0 5px 4px; border: 1px solid #3c7f96; border-left-color: #8295a8; background: #bdd5ef; }
.child-active { background: linear-gradient(#9ab6d6, #b5cfec 20px); }
.child-plot { background: #d5e2f0; border-color: #9ea7b0; }
.child-bar { display: flex; align-items: center; gap: 1px; height: 18px; padding-top: 2px; flex: none; }
.child-bar > svg { width: 9px; height: 9px; margin-right: 2px; }
.child-bar span { margin-right: auto; }
.child-plot .child-bar span { color: #9099a3; }
.child-bar button { width: 21px; height: 11px; border: 1px solid #7d9cbf; background: linear-gradient(#bfd4ec, #8eaed3 50%, #b3ccea); }
.child-plot .child-bar button { border-color: #a8b8c9; background: #d1deec; }
.child-bar .close { background: linear-gradient(#e99a86, #c9452c 50%, #d9694c); border-color: #8c3a32; }
.child-bar button svg { width: 10px; height: 8px; }
.canvas { flex: 1; min-height: 0; background: #c0c0c0; box-shadow: 0 0 0 1px #98a4b0; }
.child-plot .canvas { background: #fff; }
.canvas svg { width: 100%; height: 100%; }
.net-labels { font: 700 5px "Open Sans", sans-serif; fill: #333; }
.grid { fill: none; stroke: #d3b9df; stroke-dasharray: 2 1; }
.trace { font: 700 8px "Liberation Sans", sans-serif; fill: #2a86d4; text-anchor: middle; }
.ylab { font: 700 8px "Liberation Sans", sans-serif; text-anchor: end; fill: #222; }
.xlab { font: 700 8px "Liberation Sans", sans-serif; text-anchor: middle; fill: #222; }
.lt-status { height: 12px; flex: none; }

/* Call controls */
.callbar { position: absolute; bottom: 36px; left: 50%; transform: translateX(-50%); display: flex; height: 52px; border-radius: 4px; overflow: hidden; color: #fff; box-shadow: 0 3px 8px rgba(0, 0, 0, .45); }
.callbar-rec { display: flex; align-items: center; gap: 17px; width: 98px; padding-left: 14px; border-right: 1px solid #1c1c1c; background: rgba(65, 65, 65, .98); color: #a8a8a8; font-size: 12px; font-weight: 600; }
.callbar-rec svg { width: 16px; height: 16px; }
.callbar button { width: 52px; background: rgba(65, 65, 65, .98); position: relative; }
.callbar button.side { background: rgba(52, 52, 52, .94); }
.callbar button.hangup { background: #9b2e41; }
.callbar button svg { width: 24px; height: 24px; }
.notice { position: absolute; top: 13px; right: 9px; width: 9px; height: 9px; border-radius: 50%; background: #e97548; }

/* Participants */
.people { display: flex; height: 94px; position: relative; background: #1b1a1a; color: #fff; flex: none; }
.overflow-list { flex: 1; display: flex; align-items: center; justify-content: flex-end; gap: 42px; padding-right: 21px; }
.avatar { display: flex; align-items: center; justify-content: center; width: 42px; height: 42px; border-radius: 50%; font-size: 16px; font-weight: 600; flex: none; }
.more { width: 44px; height: 44px; margin-right: -2px; background: #6264a7; color: #fff; font-size: 13px; }
.sd { background: #d8e4e9; color: #3f606b; }
.ad { background: #f9ebcf; color: #856416; }
.sv { background: #e7ced2; color: #67212a; }
.ts { background: #d1ebde; color: #267047; }
.sp { background: #cedade; color: #2a484e; }
.tile { display: flex; align-items: center; justify-content: center; width: 180px; height: 94px; position: relative; }
.tile .avatar { width: 44px; height: 44px; }
.t1 { background: #3b3a3a; }
.t2 { background: #383737; }
.t3 { background: #323131; }
.t4 { background: radial-gradient(circle at 50% 50%, #5d5b91 20px, #4a4869 50px, #3d3b4a 90px); }
.ns { background: #fbded9; color: #8b3a2c; }
.su { background: #f7ebce; color: #80641a; }
.vv { background: #f1d3cc; color: #7c2c1d; }
.ps { background: #e2deef; color: #41416d; box-shadow: 0 0 0 2px #34335a, 0 0 0 5px #979df5; }
.caption { position: absolute; left: 15px; right: 10px; bottom: 0; display: flex; align-items: center; gap: 10px; height: 18px; font-size: 11px; font-weight: 600; white-space: nowrap; }
.caption svg { width: 16px; height: 16px; }
.t2 .caption, .t3 .caption { left: 21px; }
.watermark { position: absolute; right: 57px; top: 16px; width: 236px; color: rgba(180, 180, 180, .72); font-size: 14px; line-height: 20px; white-space: nowrap; }
.wm-title { font-size: 19px; line-height: 25px; }

/* Windows taskbar */
.taskbar { display: flex; height: 40px; background: linear-gradient(90deg, #cde7ed, #d3e1ed 50%, #d7e0ee); color: #111; flex: none; }
.start { width: 48px; }
.start svg { width: 16px; height: 16px; }
.tb-search { display: flex; align-items: center; width: 344px; padding-left: 12px; background: #fff; border: 1px solid #c4ced2; }
.tb-search svg { width: 16px; height: 16px; margin-right: 11px; }
.tb-search input { flex: 1; font-size: 14px; }
.tb-search input::placeholder { color: #333; opacity: 1; }
.sys { width: 48px; }
.sys svg { width: 18px; height: 18px; }
.apps { display: flex; margin-left: 2px; }
.apps button { width: 49px; position: relative; }
.apps svg { width: 24px; height: 24px; }
.open::after { content: ""; position: absolute; left: 5px; right: 4px; bottom: 0; height: 2px; background: #0078d7; }
.active { background: #eef5f8; }
.active::after { left: 0; right: 0; }
.chrome-badge { position: absolute; left: 23px; top: 18px; width: 16px; height: 16px; border-radius: 50%; background: #c2185b; color: #fff; font-size: 9px; line-height: 16px; }
.tray { display: flex; margin-left: auto; margin-right: 4px; border-right: 1px solid #9ca7ae; }
.tray button { width: 24px; }
.tray svg { width: 16px; height: 16px; }
.tray .lang { width: 34px; }
.tray .clock { width: 72px; flex-direction: column; line-height: 18px; font-size: 11px; white-space: nowrap; }
.tray .notif { width: 40px; margin-right: 8px; }
.tray .notif svg { width: 17px; height: 17px; }
```
